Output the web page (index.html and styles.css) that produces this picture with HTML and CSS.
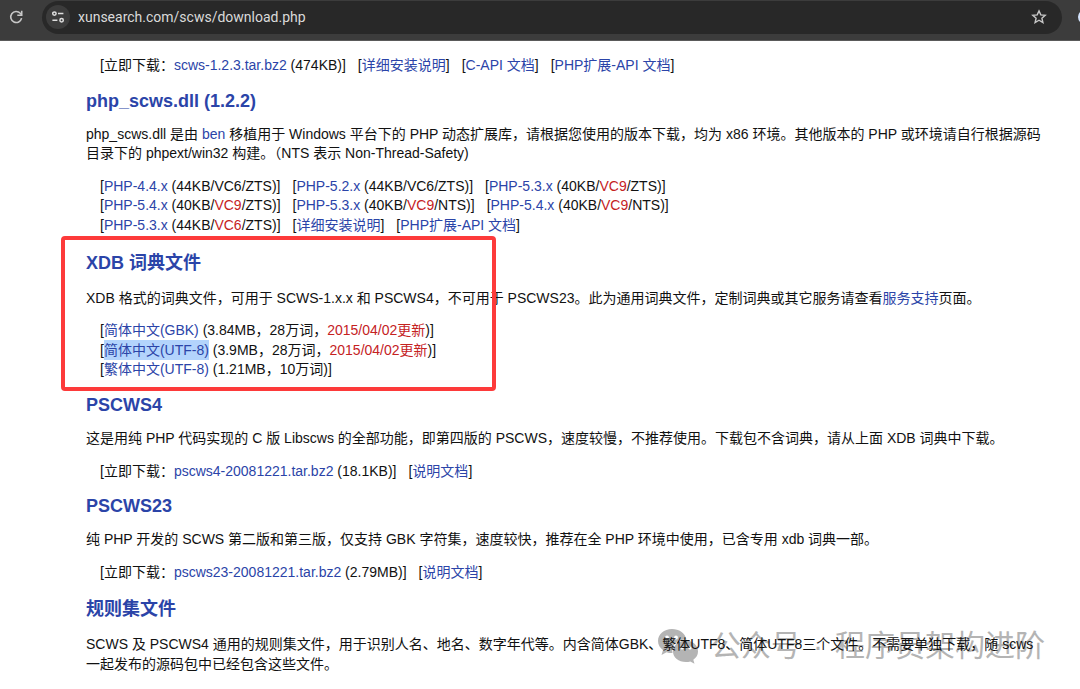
FILE: index.html
```
<!DOCTYPE html>
<html lang="zh-CN">
<head>
  <meta charset="UTF-8">
  <meta name="viewport" content="width=device-width, initial-scale=1.0">
  <title>SCWS 下载</title>
  <link rel="stylesheet" href="styles.css">
</head>
<body>
  <header class="toolbar">
    <button class="icon-btn" type="button" aria-label="Reload">
      <svg width="16" height="16" viewBox="0 0 16 16" fill="none" stroke="#c7c7c7" stroke-width="1.6">
        <path d="M13.600 9.200A5.500 5.500 0 1 1 12.300 4.300L13.600 5.600"/>
        <path d="M13.700 1.800v4.400H9.300"/>
      </svg>
    </button>
    <div class="address-bar">
      <button class="site-info" type="button" aria-label="Site information">
        <svg width="14" height="14" viewBox="0 0 14 14" fill="none" stroke="#dedede" stroke-width="1.5">
          <circle cx="3.4" cy="3.6" r="1.7"/>
          <path d="M7 3.600h5.400M1.400 10.200h5"/>
          <circle cx="10.6" cy="10.2" r="1.7"/>
        </svg>
      </button>
      <input class="url" type="text" value="xunsearch.com/scws/download.php" aria-label="Address">
      <button class="icon-btn" type="button" aria-label="Bookmark">
        <svg width="16" height="16" viewBox="0 0 16 16" fill="none" stroke="#c7c7c7" stroke-width="1.4">
          <path d="M8 1.900l1.800 4 4.400.4-3.300 2.900 1 4.300L8 11.200l-3.900 2.300 1-4.300-3.300-2.900 4.400-.4z"/>
        </svg>
      </button>
    </div>
    <span class="avatar"></span>
  </header>

  <main class="content">
    <div class="files">
      <div class="row">
        <span>[立即下载：<a href="#">scws-1.2.3.tar.bz2</a> (474KB)]</span>
        <span>[<a href="#">详细安装说明</a>]</span>
        <span>[<a href="#">C-API 文档</a>]</span>
        <span>[<a href="#">PHP扩展-API 文档</a>]</span>
      </div>
    </div>

    <section>
      <h2>php_scws.dll (1.2.2)</h2>
      <p>php_scws.dll 是由 <a href="#">ben</a> 移植用于 Windows 平台下的 PHP 动态扩展库，请根据您使用的版本下载，均为 x86 环境。其他版本的 PHP 或环境请自行根据源码目录下的 phpext/win32 构建。（NTS 表示 Non-Thread-Safety)</p>
      <div class="files">
        <div class="row">
          <span>[<a href="#">PHP-4.4.x</a> (44KB/VC6/ZTS)]</span>
          <span>[<a href="#">PHP-5.2.x</a> (44KB/VC6/ZTS)]</span>
          <span>[<a href="#">PHP-5.3.x</a> (40KB/<em>VC9</em>/ZTS)]</span>
        </div>
        <div class="row">
          <span>[<a href="#">PHP-5.4.x</a> (40KB/<em>VC9</em>/ZTS)]</span>
          <span>[<a href="#">PHP-5.3.x</a> (40KB/<em>VC9</em>/NTS)]</span>
          <span>[<a href="#">PHP-5.4.x</a> (40KB/<em>VC9</em>/NTS)]</span>
        </div>
        <div class="row">
          <span>[<a href="#">PHP-5.3.x</a> (44KB/<em>VC6</em>/ZTS)]</span>
          <span>[<a href="#">详细安装说明</a>]</span>
          <span>[<a href="#">PHP扩展-API 文档</a>]</span>
        </div>
      </div>
    </section>

    <section class="marked">
      <h2 class="zh">XDB 词典文件</h2>
      <p>XDB 格式的词典文件，可用于 SCWS-1.x.x 和 PSCWS4，不可用于 PSCWS23。此为通用词典文件，定制词典或其它服务请查看<a href="#">服务支持</a>页面。</p>
      <div class="files">
        <div class="row"><span>[<a href="#">简体中文(GBK)</a> (3.84MB，28万词，<em>2015/04/02更新</em>)]</span></div>
        <div class="row"><span>[<a class="selected" href="#">简体中文(UTF-8)</a> (3.9MB，28万词，<em>2015/04/02更新</em>)]</span></div>
        <div class="row"><span>[<a href="#">繁体中文(UTF-8)</a> (1.21MB，10万词)]</span></div>
      </div>
    </section>

    <section>
      <h2>PSCWS4</h2>
      <p>这是用纯 PHP 代码实现的 C 版 Libscws 的全部功能，即第四版的 PSCWS，速度较慢，不推荐使用。下载包不含词典，请从上面 XDB 词典中下载。</p>
      <div class="files">
        <div class="row">
          <span>[立即下载：<a href="#">pscws4-20081221.tar.bz2</a> (18.1KB)]</span>
          <span>[<a href="#">说明文档</a>]</span>
        </div>
      </div>
    </section>

    <section>
      <h2>PSCWS23</h2>
      <p>纯 PHP 开发的 SCWS 第二版和第三版，仅支持 GBK 字符集，速度较快，推荐在全 PHP 环境中使用，已含专用 xdb 词典一部。</p>
      <div class="files">
        <div class="row">
          <span>[立即下载：<a href="#">pscws23-20081221.tar.bz2</a> (2.79MB)]</span>
          <span>[<a href="#">说明文档</a>]</span>
        </div>
      </div>
    </section>

    <section>
      <h2 class="zh">规则集文件</h2>
      <p>SCWS 及 PSCWS4 通用的规则集文件，用于识别人名、地名、数字年代等。内含简体GBK、繁体UTF8、简体UTF8三个文件。不需要单独下载，随 scws 一起发布的源码包中已经包含这些文件。</p>
    </section>
  </main>

  <div class="watermark">
    <svg width="42" height="36" viewBox="0 0 42 36">
      <path fill="#b4b4b4" d="M15 1C7 1 1 6 1 13c0 4 2 7 5 9l-1.500 5 5-2.700c2 .7 4 .9 6 .8C14 17 20 11 29.500 11.500 28 5 22 1 15 1z"/>
      <path fill="#b4b4b4" d="M29 12.500c-7.500 0-13 5-13 11S21.500 34 29 34c1.500 0 3-.2 4.300-.6l4.200 2.300-1.200-4c3-2 4.700-4.600 4.700-8.200 0-6-5-11-12-11z"/>
      <g fill="#fff">
        <circle cx="10" cy="9.500" r="1.900"/>
        <circle cx="19" cy="9.500" r="1.900"/>
        <circle cx="25" cy="20" r="1.600"/>
        <circle cx="33" cy="20" r="1.600"/>
      </g>
    </svg>
    <span>公众号</span>
    <span>·</span>
    <span>程序员架构进阶</span>
  </div>
</body>
</html>
```
FILE: styles.css
```
* { box-sizing: border-box; }

body {
  margin: 0;
  background: #fff;
  color: #111;
  font-family: "Liberation Sans", "Noto Sans CJK SC", Arial, sans-serif;
  font-size: 14px;
  line-height: 1.4;
  position: relative;
  overflow: hidden;
}

/* browser bar */
.toolbar {
  display: flex;
  align-items: center;
  height: 41px;
  padding: 0 0 6px 8px;
  background: #3c3c3c;
  border-bottom: 1px solid #5a5a5a;
  overflow: hidden;
}

.address-bar {
  flex: 1;
  display: flex;
  align-items: center;
  height: 33px;
  margin: 0 16px 0 18px;
  padding: 0 15px 0 4px;
  background: #282828;
  border-radius: 17px;
}

.icon-btn, .site-info {
  display: flex;
  align-items: center;
  justify-content: center;
  padding: 0;
  border: none;
  background: none;
  cursor: pointer;
}

.site-info {
  width: 24px;
  height: 24px;
  border-radius: 50%;
  background: #3c3c3c;
}

.url {
  flex: 1;
  min-width: 0;
  margin-left: 8px;
  padding: 0;
  border: none;
  outline: none;
  background: none;
  color: #dadada;
  font-family: Roboto, sans-serif;
  font-size: 14px;
}

.avatar {
  width: 14px;
  height: 14px;
  margin-right: -12px;
  border-radius: 50%;
  background: #d3e3fd;
}

/* page */
.content {
  padding: 15px 30px 4px 86px;
  position: relative;
  z-index: 1;
}

h2 {
  margin: 12px 0;
  color: #2b44a8;
  font-size: 18px;
  line-height: 24px;
}

h2.zh { line-height: 28px; }

p { margin: 0 0 13px; }

a {
  color: #2b44a8;
  text-decoration: none;
}

a:hover { text-decoration: underline; }

em {
  color: #c5221f;
  font-style: normal;
}

.files {
  padding-left: 14px;
  margin-bottom: 13px;
}

.row {
  display: flex;
  flex-wrap: wrap;
  gap: 0 12px;
}

.selected {
  padding: 2px 0;
  background: #b3d4fc;
}

.marked { position: relative; }

/* red frame round the dictionary downloads */
.marked::after {
  content: "";
  box-sizing: border-box;
  position: absolute;
  top: -13px;
  bottom: -11px;
  left: -25px;
  width: 435px;
  border: 4px solid #fd3a3a;
  border-radius: 4px;
  pointer-events: none;
}

.watermark {
  position: absolute;
  right: 35px;
  bottom: 25px;
  display: flex;
  align-items: center;
  gap: 12px;
  color: #b4b4b4;
  font-family: "Liberation Sans", "Noto Sans CJK SC", sans-serif;
  font-size: 30px;
}
```
